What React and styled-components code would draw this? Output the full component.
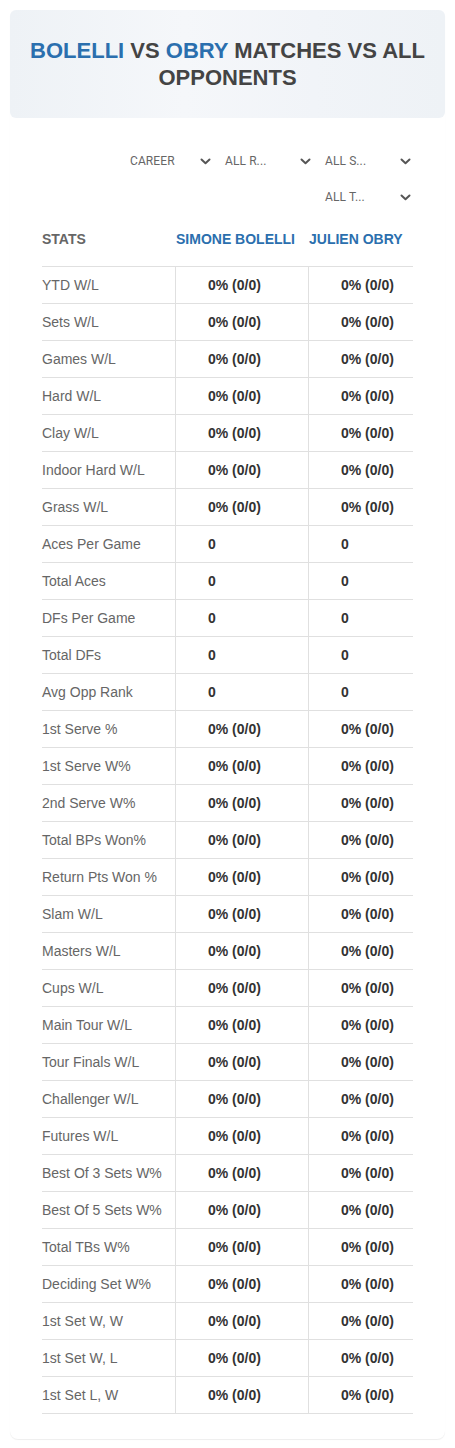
import React from "react";
import styled, { createGlobalStyle } from "styled-components";

const Global = createGlobalStyle`
  html, body { margin: 0; padding: 0; background: #ffffff; }
  body { font-family: "Liberation Sans", Arial, sans-serif; }
`;

const Page = styled.div`
  padding: 10px 10px 10px 10px;
`;

const Card = styled.div`
  background: #fff;
  border-radius: 8px;
  box-shadow: 0 1px 1px rgba(0, 0, 0, 0.07);
  padding-bottom: 25px;
`;

const Header = styled.div`
  border-radius: 6px;
  background: linear-gradient(90deg, #eef2f6 0%, #f5f7fa 40%, #f1f4f8 70%, #eef2f6 100%);
  height: 108px;
  display: flex;
  align-items: center;
  justify-content: center;
  padding: 0 12px;
  box-sizing: border-box;
`;

const Title = styled.h1`
  margin: 0;
  text-align: center;
  font-size: 22px;
  line-height: 27px;
  font-weight: 700;
  color: #444;
  text-transform: uppercase;
`;

const Name = styled.span`
  color: #2b6fae;
`;

const Body = styled.div`
  padding: 25px 32px 0 32px;
`;

const Filters = styled.div`
  display: flex;
  flex-wrap: wrap;
  justify-content: flex-end;
  column-gap: 5px;
`;

const Select = styled.div`
  width: ${(p) => p.$w}px;
  height: 36px;
  display: flex;
  align-items: center;
  justify-content: space-between;
  padding: 0 2px 0 7px;
  box-sizing: border-box;
  font-family: Roboto, "Open Sans", sans-serif;
  font-size: 12px;
  color: #666;
  letter-spacing: 0.1px;
`;

const Chevron = () => (
  <svg width="11" height="7" viewBox="0 0 11 7" fill="none">
    <path d="M1.5 1.5 L5.5 5.2 L9.5 1.5" stroke="#555" strokeWidth="2" strokeLinecap="round" strokeLinejoin="round" />
  </svg>
);

const Table = styled.div`
  display: grid;
  grid-template-columns: 133px 133px 105px;
`;

const HeadCell = styled.div`
  height: 52px;
  box-sizing: border-box;
  padding-bottom: 4px;
  display: flex;
  align-items: center;
  padding-left: ${(p) => (p.$first ? 0 : 1)}px;
  font-size: 14px;
  font-weight: 700;
  color: ${(p) => (p.$blue ? "#2b6fae" : "#666")};
  border-bottom: 1px solid #e0e0e0;
  white-space: nowrap;
`;

const Cell = styled.div`
  height: 36px;
  display: flex;
  align-items: center;
  border-bottom: 1px solid #e0e0e0;
  border-left: ${(p) => (p.$first ? "none" : "1px solid #e0e0e0")};
  padding-left: ${(p) => (p.$first ? 0 : 32)}px;
  font-size: 14px;
  font-weight: ${(p) => (p.$first ? 400 : 700)};
  color: ${(p) => (p.$first ? "#666" : "#333")};
  white-space: nowrap;
`;

const P = "0% (0/0)";
const rows = [
  ["YTD W/L", P],
  ["Sets W/L", P],
  ["Games W/L", P],
  ["Hard W/L", P],
  ["Clay W/L", P],
  ["Indoor Hard W/L", P],
  ["Grass W/L", P],
  ["Aces Per Game", "0"],
  ["Total Aces", "0"],
  ["DFs Per Game", "0"],
  ["Total DFs", "0"],
  ["Avg Opp Rank", "0"],
  ["1st Serve %", P],
  ["1st Serve W%", P],
  ["2nd Serve W%", P],
  ["Total BPs Won%", P],
  ["Return Pts Won %", P],
  ["Slam W/L", P],
  ["Masters W/L", P],
  ["Cups W/L", P],
  ["Main Tour W/L", P],
  ["Tour Finals W/L", P],
  ["Challenger W/L", P],
  ["Futures W/L", P],
  ["Best Of 3 Sets W%", P],
  ["Best Of 5 Sets W%", P],
  ["Total TBs W%", P],
  ["Deciding Set W%", P],
  ["1st Set W, W", P],
  ["1st Set W, L", P],
  ["1st Set L, W", P],
];

const filters = [
  { label: "CAREER", w: 90 },
  { label: "ALL R...", w: 95 },
  { label: "ALL S...", w: 95 },
  { label: "ALL T...", w: 95 },
];

export default function App() {
  return (
    <Page>
      <Global />
      <Card>
        <Header>
          <Title>
            <Name>Bolelli</Name> vs <Name>Obry</Name> Matches vs All Opponents
          </Title>
        </Header>
        <Body>
          <Filters>
            {filters.map((f) => (
              <Select key={f.label} $w={f.w}>
                <span>{f.label}</span>
                <Chevron />
              </Select>
            ))}
          </Filters>
          <Table>
            <HeadCell $first>STATS</HeadCell>
            <HeadCell $blue>SIMONE BOLELLI</HeadCell>
            <HeadCell $blue>JULIEN OBRY</HeadCell>
            {rows.map(([label, v]) => (
              <React.Fragment key={label}>
                <Cell $first>{label}</Cell>
                <Cell>{v}</Cell>
                <Cell>{v}</Cell>
              </React.Fragment>
            ))}
          </Table>
        </Body>
      </Card>
    </Page>
  );
}
